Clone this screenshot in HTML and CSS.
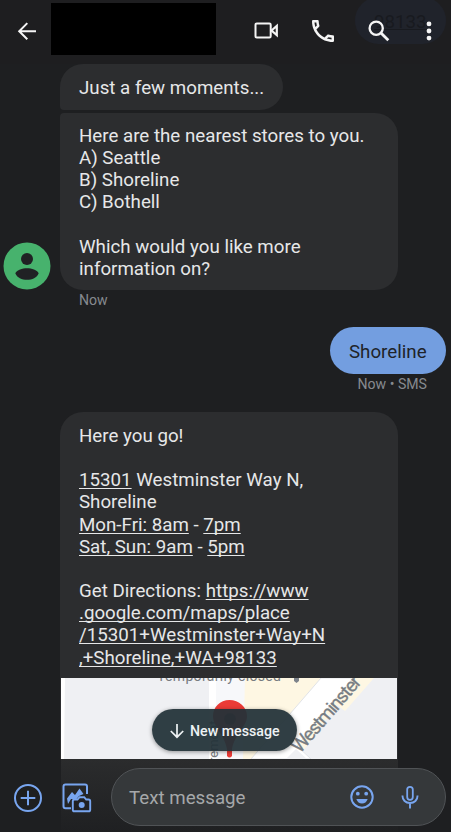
FILE: index.html
```html
<!DOCTYPE html>
<html lang="en">
<head>
<meta charset="utf-8">
<title>Messages</title>
<link rel="stylesheet" href="styles.css">
</head>
<body>
<div class="phone">
  <header class="top">
    <div class="ghost"><span>98133</span></div>
    <svg class="back" viewBox="0 0 24 24" width="24" height="24"><path d="M21 12.2H4.2M12.3 4.1l-8.1 8.1 8.1 8.1" fill="none" stroke="#f5f5f5" stroke-width="2"/></svg>
    <div class="contact"></div>
    <svg class="video" viewBox="0 0 26 20" width="26" height="20"><path d="M2.8 2.5H15.4Q16.7 2.5 16.7 3.8V15.2Q16.7 16.5 15.4 16.5H2.8Q1.5 16.5 1.5 15.2V3.8Q1.5 2.5 2.8 2.5Z" fill="none" stroke="#f5f5f5" stroke-width="2"/><path d="M17.500 9.500l5.300-4.500v9Z" fill="none" stroke="#f5f5f5" stroke-width="2.200"/></svg>
    <svg class="call" viewBox="3 3 18 18" width="22" height="22"><path fill="#f5f5f5" d="M6.54 5c.06.89.21 1.76.45 2.59l-1.2 1.2c-.41-1.2-.67-2.47-.76-3.79h1.51m9.86 12.02c.85.24 1.72.39 2.6.45v1.49c-1.32-.09-2.59-.35-3.8-.75l1.2-1.19M7.5 3H4c-.55 0-1 .45-1 1 0 9.39 7.61 17 17 17 .55 0 1-.45 1-1v-3.49c0-.55-.45-1-1-1-1.24 0-2.45-.2-3.57-.57-.1-.04-.21-.05-.31-.05-.26 0-.51.1-.71.29l-2.2 2.2c-2.83-1.45-5.15-3.76-6.59-6.59l2.2-2.2c.28-.28.36-.67.25-1.02C8.7 6.45 8.5 5.25 8.5 4c0-.55-.45-1-1-1z"/></svg>
    <svg class="search" viewBox="0 0 22 22" width="22" height="22"><circle cx="8.2" cy="8.2" r="6.6" fill="none" stroke="#f5f5f5" stroke-width="2.3"/><path d="M13 13l7.3 7.3" stroke="#f5f5f5" stroke-width="2.8"/></svg>
    <svg class="more" viewBox="0 0 6 20" width="6" height="20"><g fill="#f5f5f5"><circle cx="3" cy="2.9" r="2.4"/><circle cx="3" cy="10" r="2.4"/><circle cx="3" cy="17.1" r="2.4"/></g></svg>
  </header>

  <main class="thread">
    <p class="bubble first">Just a few moments...</p>
    <div class="row">
      <svg class="avatar" viewBox="0 0 48 48" width="48" height="48"><circle cx="24" cy="24" r="23.5" fill="#47b26d"/><circle cx="24" cy="17" r="6" fill="#202124"/><path d="M12.3 31.2C16 24.7 32 24.7 35.7 31.2C32.5 40 15.500 40 12.300 31.2Z" fill="#202124"/></svg>
      <p class="bubble second">Here are the nearest stores to you.<br>A) Seattle<br>B) Shoreline<br>C) Bothell<br><br>Which would you like more<br>information on?</p>
    </div>
    <div class="stamp">Now</div>
    <p class="reply">Shoreline</p>
    <div class="stamp sent">Now • SMS</div>
    <article class="bubble third">
      <p>Here you go!<br><br><u>15301</u> Westminster Way N,<br>Shoreline<br><u>Mon-Fri: 8am</u> - <u>7pm</u><br><u>Sat, Sun: 9am</u> - <u>5pm</u><br><br>Get Directions: <u>https://www</u><br><u>.google.com/maps/place</u><br><u>/15301+Westminster+Way+N</u><br><u>,+Shoreline,+WA+98133</u></p>
      <svg class="map" viewBox="0 0 336 81" width="336" height="81">
        <rect width="336" height="81" fill="#eff0f3"/>
        <path d="M0 0H4L3 81H0Z" fill="#fff"/>
        <path d="M155 0h80v81h-80z" fill="#f7f8fa"/>
        <path d="M184 0h129L284 33l-8-6-40 54h-54Z" fill="#fef7e3"/>
        <path d="M148 0h7v81h-7z" fill="#fff"/>
        <path d="M260 0h32L236 68l14 13h-60Z" fill="#fff" stroke="#e1e3e7"/>
        <path d="M225 81l10-10 11 10Z" fill="#eff0f3"/>
        <path d="M233 0h5v3l-2.500 2-2.500-2Z" fill="#7d838b"/>
        <text x="96" y="3" class="place" textLength="124">Temporarily closed</text>
        <text class="minor" transform="translate(157 91) rotate(-90)">Fremont</text>
        <path d="M168.500 22C159 22 152 29 152 38C152 49 163 55 166 71V78q2.500 3 5 0V71C174 55 186 49 186 38C186 29 178 22 168.500 22Z" fill="#eb3b36"/>
        <circle cx="169" cy="41" r="6" fill="#9c1d1c"/>
        <text class="street" transform="translate(239 76) rotate(-49)" textLength="95">Westminster</text>
      </svg>
    </article>
    <button class="jump"><svg viewBox="0 0 16 16" width="16" height="16"><path d="M8 1v13M1.800 8L8 14.200 14.200 8" fill="none" stroke="#eef2f4" stroke-width="1.700"/></svg><span>New message</span></button>
  </main>

  <footer class="bar">
    <svg class="plus" viewBox="0 0 30 30" width="30" height="30"><circle cx="15" cy="15" r="13" fill="none" stroke="#78a5ef" stroke-width="2"/><path d="M15 7.700v14.600M7.700 15h14.600" stroke="#78a5ef" stroke-width="2"/></svg>
    <svg class="gallery" viewBox="0 0 30 30" width="30" height="30"><path d="M9 25.300H3.500Q1.500 25.300 1.500 23.300V3.500Q1.500 1.500 3.500 1.500H23Q25 1.500 25 3.500V11" fill="none" stroke="#78a5ef" stroke-width="2"/><path d="M5 15.500l5-6.500 3 3 4.500-6.500 4 5.500-4.500 2-2.500 3H9l-3 5Z" fill="#78a5ef"/><path d="M12.500 16.500h3l2-2.300h4.700l2 2.300h2.300q1.700 0 1.700 1.700v8.500q0 1.600-1.700 1.600h-14q-1.700 0-1.700-1.600v-8.500q0-1.700 1.700-1.700Z" fill="#202124" stroke="#78a5ef" stroke-width="1.900"/><circle cx="19.700" cy="22" r="3" fill="#78a5ef"/></svg>
    <div class="field">
      <span>Text message</span>
      <svg class="smile" viewBox="0 0 24 24" width="24" height="24"><circle cx="12" cy="12" r="10.700" fill="none" stroke="#78a5ef" stroke-width="2"/><circle cx="7.800" cy="8.700" r="1.900" fill="#78a5ef"/><circle cx="16.200" cy="8.700" r="1.900" fill="#78a5ef"/><path d="M6.300 14h11.400Q16 18.500 12 18.500T6.300 14Z" fill="#78a5ef"/></svg>
      <svg class="mic" viewBox="0 0 18 24" width="18" height="24"><rect x="6.200" y="1.800" width="5.600" height="13" rx="2.800" fill="none" stroke="#78a5ef" stroke-width="1.800"/><path d="M1.500 10.500V11C1.500 15 4.500 18 9 18S16.500 15 16.500 11v-.500M9 18v5.500" fill="none" stroke="#78a5ef" stroke-width="1.900"/></svg>
    </div>
  </footer>
</div>
</body>
</html>
```

FILE: styles.css
```css
* { box-sizing: border-box; }
body { margin: 0; background: #1e1f21; }
p { margin: 0; }
svg { display: block; flex: none; }
.phone {
  width: 451px;
  height: 832px;
  overflow: hidden;
  display: grid;
  grid-template-rows: 64px 695px 73px;
  background: #1e1f21;
  color: #e6e7e8;
  font-family: Roboto, sans-serif;
  font-size: 18.73px;
  line-height: 22.15px;
}
.top {
  position: relative;
  display: flex;
  align-items: flex-start;
  background: #1e1e20;
}
.ghost {
  position: absolute;
  left: 355px;
  top: -3px;
  width: 91px;
  height: 47px;
  border-radius: 24px;
  background: #20232b;
  color: #181a1f;
  padding: 14px 0 0 19px;
  text-decoration: underline;
}
.top svg { position: relative; }
.back { margin: 19px 0 0 15px; }
.contact { width: 165px; height: 52px; margin: 3px 0 0 12px; background: #000; }
.video { margin: 21px 0 0 38px; }
.call { margin: 20px 0 0 32px; }
.search { margin: 20px 0 0 34px; }
.more { margin: 21px 0 0 36px; }
.thread {
  position: relative;
  overflow: hidden;
  display: flex;
  flex-direction: column;
  align-items: flex-start;
}
.thread > * { flex: none; }
.bubble { background: #2c2d2f; white-space: nowrap; }
.first {
  width: 223px;
  height: 46px;
  padding: 13px 19px 0;
  border-radius: 23px 23px 23px 4px;
  margin-left: 60px;
}
.row { display: flex; align-items: flex-end; margin-top: 3px; }
.avatar { margin: 0 9px 0 3px; }
.second {
  width: 338px;
  height: 177px;
  padding: 12px 19px 0;
  border-radius: 4px 23px 23px 23px;
}
.stamp {
  margin: 2px 0 0 79px;
  color: #868a8f;
  font-size: 14.1px;
  line-height: 16px;
}
.reply {
  align-self: flex-end;
  width: 116px;
  height: 47px;
  margin: 19px 5px 0 0;
  padding: 14px 19px 0;
  border-radius: 24px;
  background: #739ee0;
  color: #202429;
}
.sent { align-self: flex-end; margin: 2px 24px 0 0; }
.third {
  width: 338px;
  height: 400px;
  margin: 20px 0 0 60px;
  padding-top: 13px;
  border-radius: 23px 23px 0 0;
}
.third p { padding-left: 19px; height: 253px; }
u { text-decoration-thickness: 1px; text-underline-offset: 2px; text-decoration-skip-ink: none; }
.map { margin-left: 1px; }
.place { font-size: 14px; fill: #777b80; }
.minor { font-size: 13px; fill: #777b80; }
.street { font-size: 19px; fill: #777d83; stroke: #777d83; stroke-width: .3px; }
.jump {
  position: absolute;
  left: 152px;
  top: 645px;
  width: 145px;
  height: 42px;
  display: flex;
  align-items: center;
  gap: 5px;
  padding: 1px 0 0 17px;
  border: 0;
  border-radius: 21px;
  background: rgba(35, 50, 56, .94);
  color: #eef2f4;
  box-shadow: 0 1px 4px rgba(0, 0, 0, .4);
  font: 500 14.2px/20px Roboto, sans-serif;
  white-space: nowrap;
}
.bar {
  display: flex;
  align-items: flex-start;
  background: linear-gradient(#2b2c2d, #1f2022) 61px 0 / 337px 73px no-repeat, #1e1f21;
}
.plus { margin: 24px 0 0 13px; }
.gallery { margin: 24px 0 0 19px; }
.field {
  width: 335px;
  height: 58px;
  margin: 9px 0 0 19px;
  padding: 0 26px 0 17px;
  display: flex;
  align-items: center;
  border: 1px solid #505356;
  border-radius: 29px;
  background: #35383a;
  color: #a6a8aa;
}
.field span { flex: 1; padding-top: 2px; }
.mic { margin-left: 27px; }
```
